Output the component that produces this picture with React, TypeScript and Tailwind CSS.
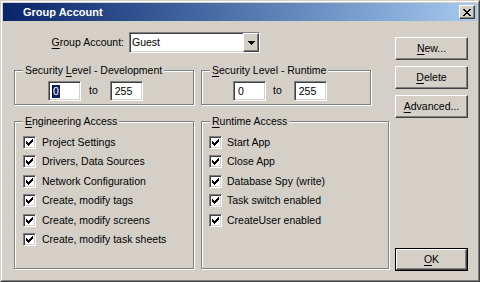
import type { ReactNode } from 'react'

const FACE = 'bg-[#d4d0c8]'
const RAISED =
  'border border-t-white border-l-white border-r-[#404040] border-b-[#404040] shadow-[inset_-1px_-1px_0_#808080]'
const SUNKEN =
  'border border-t-[#808080] border-l-[#808080] border-r-white border-b-white shadow-[inset_1px_1px_0_#404040,inset_-1px_-1px_0_#d4d0c8]'

const ENGINEERING = [
  'Project Settings',
  'Drivers, Data Sources',
  'Network Configuration',
  'Create, modify tags',
  'Create, modify screens',
  'Create, modify task sheets',
]

const RUNTIME = [
  'Start App',
  'Close App',
  'Database Spy (write)',
  'Task switch enabled',
  'CreateUser enabled',
]

const CHECK_PIXELS = [
  [6, 0, 1], [5, 1, 2], [0, 2, 1], [4, 2, 3], [0, 3, 2], [3, 3, 3], [0, 4, 5], [1, 5, 3], [2, 6, 1],
]

const CLOSE_PIXELS = [
  [0, 0, 2], [6, 0, 2], [1, 1, 2], [5, 1, 2], [2, 2, 4], [3, 3, 2], [2, 4, 4], [1, 5, 2], [5, 5, 2], [0, 6, 2], [6, 6, 2],
]

function Pixels({ rows, w, h }: { rows: number[][]; w: number; h: number }) {
  return (
    <svg width={w} height={h} viewBox={`0 0 ${w} ${h}`} shapeRendering="crispEdges">
      {rows.map(([x, y, len], i) => (
        <rect key={i} x={x} y={y} width={len} height={1} fill="#000" />
      ))}
    </svg>
  )
}

function Key({ pre = '', k, post = '' }: { pre?: string; k: string; post?: string }) {
  return (
    <>
      {pre}
      <span className="underline underline-offset-[2px]">{k}</span>
      {post}
    </>
  )
}

function GroupBox({
  legend,
  className,
  children,
}: {
  legend: ReactNode
  className: string
  children: ReactNode
}) {
  return (
    <div
      className={`relative shrink-0 border border-[#808080] shadow-[inset_1px_1px_0_#fff,1px_1px_0_#fff] ${className}`}
    >
      <span className={`absolute left-[8px] top-[-7px] px-[2px] leading-[13px] ${FACE}`}>{legend}</span>
      {children}
    </div>
  )
}

function Edit({ value, selected = false }: { value: string; selected?: boolean }) {
  return (
    <div className={`flex h-[20px] w-[33px] items-center bg-white pl-[3px] leading-[13px] ${SUNKEN}`}>
      {selected ? (
        <span className="flex items-center">
          <span className="h-[13px] w-px bg-black" />
          <span className="bg-[#0a246a] pr-[1px] text-white">{value}</span>
        </span>
      ) : (
        <span className="pl-[1px]">{value}</span>
      )}
    </div>
  )
}

function CheckBox({ label, gap }: { label: string; gap: string }) {
  return (
    <div className="flex h-[13px] items-center leading-[13px]">
      <div className={`flex h-[13px] w-[13px] shrink-0 items-center justify-center bg-white ${SUNKEN}`}>
        <Pixels rows={CHECK_PIXELS} w={7} h={7} />
      </div>
      <span className={gap}>{label}</span>
    </div>
  )
}

function Button({ children, isDefault = false }: { children: ReactNode; isDefault?: boolean }) {
  const inner = (
    <div className={`flex h-full w-full items-center justify-center ${RAISED}`}>{children}</div>
  )
  return isDefault ? (
    <div className="h-[23px] w-[73px] border border-black">{inner}</div>
  ) : (
    <div className="h-[23px] w-[73px]">{inner}</div>
  )
}

export default function App() {
  return (
    <div
      className={`h-[282px] w-[480px] overflow-hidden border border-t-[#d4d0c8] border-l-[#d4d0c8] border-r-[#404040] border-b-[#404040] text-[10.5px] text-black ${FACE}`}
      style={{ fontFamily: '"Liberation Sans", Arial, sans-serif' }}
    >
      <div className="flex h-full w-full flex-col border border-t-white border-l-white border-r-[#808080] border-b-[#808080] p-px">
        <div className="flex h-[18px] shrink-0 items-center justify-between bg-gradient-to-r from-[#0a246a] to-[#a6caf0] pl-[20px] pr-[2px]">
          <span className="text-[11px] font-bold text-white">Group Account</span>
          <div className={`flex h-[14px] w-[16px] items-center justify-center ${FACE} ${RAISED}`}>
            <Pixels rows={CLOSE_PIXELS} w={8} h={7} />
          </div>
        </div>

        <div className="flex">
          <div className="w-[392px] shrink-0">
            <div className="mt-[11px] flex h-[21px] items-center">
              <span className="w-[121px] text-right">
                <Key k="G" post="roup Account:" />
              </span>
              <div className={`ml-[5px] flex h-[21px] w-[131px] items-stretch bg-white ${SUNKEN}`}>
                <span className="flex flex-1 items-center pl-[2px]">Guest</span>
                <div className={`flex w-[16px] items-center justify-center ${FACE} ${RAISED}`}>
                  <svg width="7" height="4" viewBox="0 0 7 4" shapeRendering="crispEdges">
                    <path d="M0 0h7v1h-1v1h-1v1h-1v1h-1v-1h-1v-1h-1v-1h-1z" fill="#000" />
                  </svg>
                </div>
              </div>
            </div>

            <div className="ml-[11px] mt-[17px] flex">
              <GroupBox
                className="h-[35px] w-[180px]"
                legend={<Key pre="Security " k="L" post="evel - Development" />}
              >
                <div className="flex items-center pl-[33px] pt-[10px]">
                  <Edit value="0" selected />
                  <span className="ml-[8px]">to</span>
                  <div className="ml-[12px]">
                    <Edit value="255" />
                  </div>
                </div>
              </GroupBox>
              <GroupBox
                className="ml-[7px] h-[35px] w-[170px]"
                legend={<Key k="S" post="ecurity Level - Runtime" />}
              >
                <div className="flex items-center pl-[31px] pt-[10px]">
                  <Edit value="0" />
                  <span className="ml-[7px]">to</span>
                  <div className="ml-[12px]">
                    <Edit value="255" />
                  </div>
                </div>
              </GroupBox>
            </div>

            <div className="ml-[11px] mt-[16px] flex">
              <GroupBox className="h-[148px] w-[180px]" legend={<Key k="E" post="ngineering Access" />}>
                <div className="flex flex-col gap-[6.4px] pl-[8px] pt-[14px]">
                  {ENGINEERING.map(label => (
                    <CheckBox key={label} label={label} gap="ml-[6px]" />
                  ))}
                </div>
              </GroupBox>
              <GroupBox className="ml-[7px] h-[148px] w-[188px]" legend={<Key k="R" post="untime Access" />}>
                <div className="flex flex-col gap-[6.4px] pl-[7px] pt-[14px]">
                  {RUNTIME.map(label => (
                    <CheckBox key={label} label={label} gap="ml-[5px]" />
                  ))}
                </div>
              </GroupBox>
            </div>
          </div>

          <div className="flex flex-col pt-[16px]">
            <Button>
              <Key k="N" post="ew..." />
            </Button>
            <div className="mt-[6px]">
              <Button>
                <Key k="D" post="elete" />
              </Button>
            </div>
            <div className="mt-[6px]">
              <Button>
                <Key k="A" post="dvanced..." />
              </Button>
            </div>
            <div className="mt-[130px]">
              <Button isDefault>
                <Key k="O" post="K" />
              </Button>
            </div>
          </div>
        </div>
      </div>
    </div>
  )
}
